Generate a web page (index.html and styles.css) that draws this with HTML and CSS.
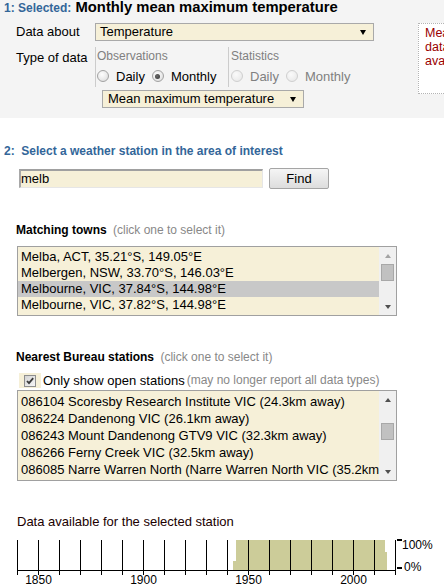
FILE: index.html
```html
<!DOCTYPE html>
<html lang="en">
<head>
<meta charset="utf-8">
<title>Climate data online</title>
<link rel="stylesheet" href="styles.css">
</head>
<body>
<section class="step1">
  <h1 class="step-title"><span class="step-num">1: Selected:</span> <span class="selected-name">Monthly mean maximum temperature</span></h1>
  <div class="step1-body">
    <div class="form">
      <div class="form-row">
        <div class="label">Data about</div>
        <div class="select select-wide"><span>Temperature</span><span class="caret"></span></div>
      </div>
      <div class="form-row form-row-type">
        <div class="label label-type">Type of data</div>
        <div class="type-controls">
          <div class="fieldsets">
            <div class="fieldset fs-obs">
              <div class="legend">Observations</div>
              <div class="radios">
                <span class="radio"></span><span class="radio-label">Daily</span>
                <span class="radio radio-checked"></span><span class="radio-label">Monthly</span>
              </div>
            </div>
            <div class="fieldset fs-stats">
              <div class="legend">Statistics</div>
              <div class="radios radios-disabled">
                <span class="radio radio-disabled"></span><span class="radio-label">Daily</span>
                <span class="radio radio-disabled"></span><span class="radio-label">Monthly</span>
              </div>
            </div>
          </div>
          <div class="select select-narrow"><span>Mean maximum temperature</span><span class="caret"></span></div>
        </div>
      </div>
    </div>
    <div class="infobox">Mean maximum temperature<br>data are not always<br>available for every station</div>
  </div>
</section>

<section class="step2">
  <h2 class="step-title2">2:&nbsp; Select a weather station in the area of interest</h2>
  <div class="search-row">
    <div class="search-input">melb</div>
    <div class="find-btn">Find</div>
  </div>

  <div class="section-label">Matching towns <span class="hint">(click one to select it)</span></div>
  <div class="listbox listbox-towns">
    <div class="list-items">
      <div class="list-item">Melba, ACT, 35.21°S, 149.05°E</div>
      <div class="list-item">Melbergen, NSW, 33.70°S, 146.03°E</div>
      <div class="list-item selected">Melbourne, VIC, 37.84°S, 144.98°E</div>
      <div class="list-item">Melbourne, VIC, 37.82°S, 144.98°E</div>
    </div>
    <div class="scrollbar">
      <div class="sb-btn"><span class="arrow-up arrow-light"></span></div>
      <div class="sb-track"><div class="sb-thumb"></div></div>
      <div class="sb-btn"><span class="arrow-down"></span></div>
    </div>
  </div>

  <div class="section-label section-label-stations">Nearest Bureau stations <span class="hint">(click one to select it)</span></div>
  <div class="check-row">
    <span class="check-bg"><span class="checkbox"><svg width="10" height="10" viewBox="0 0 10 10"><path d="M2 5 L4 7.2 L8.2 2.2" fill="none" stroke="#3a3a3a" stroke-width="1.8"/></svg></span></span>
    <span class="check-text">Only show open stations</span> <span class="check-hint">(may no longer report all data types)</span>
  </div>
  <div class="listbox listbox-stations">
    <div class="list-items">
      <div class="list-item">086104 Scoresby Research Institute VIC (24.3km away)</div>
      <div class="list-item">086224 Dandenong VIC (26.1km away)</div>
      <div class="list-item">086243 Mount Dandenong GTV9 VIC (32.3km away)</div>
      <div class="list-item">086266 Ferny Creek VIC (32.5km away)</div>
      <div class="list-item">086085 Narre Warren North (Narre Warren North VIC (35.2km away)</div>
    </div>
    <div class="scrollbar">
      <div class="sb-btn"><span class="arrow-up"></span></div>
      <div class="sb-track"><div class="sb-thumb sb-thumb-mid"></div></div>
      <div class="sb-btn"><span class="arrow-down"></span></div>
    </div>
  </div>

  <div class="chart-title">Data available for the selected station</div>
  <svg class="chart" width="444" height="56" viewBox="0 0 444 56">
    <g fill="#cccc99">
      <rect x="236" y="10" width="149" height="30"/>
      <rect x="233" y="31" width="3" height="9"/>
      <rect x="385" y="22" width="2" height="18"/>
    </g>
    <g stroke="#000" stroke-width="1">
      <line x1="17.5" y1="10" x2="17.5" y2="45"/>
      <line x1="38.5" y1="10" x2="38.5" y2="45"/>
      <line x1="59.5" y1="10" x2="59.5" y2="45"/>
      <line x1="80.5" y1="10" x2="80.5" y2="45"/>
      <line x1="101.5" y1="10" x2="101.5" y2="45"/>
      <line x1="122.5" y1="10" x2="122.5" y2="45"/>
      <line x1="143.5" y1="10" x2="143.5" y2="45"/>
      <line x1="164.5" y1="10" x2="164.5" y2="45"/>
      <line x1="185.5" y1="10" x2="185.5" y2="45"/>
      <line x1="206.5" y1="10" x2="206.5" y2="45"/>
      <line x1="227.5" y1="10" x2="227.5" y2="45"/>
      <line x1="248.5" y1="10" x2="248.5" y2="45"/>
      <line x1="269.5" y1="10" x2="269.5" y2="45"/>
      <line x1="290.5" y1="10" x2="290.5" y2="45"/>
      <line x1="311.5" y1="10" x2="311.5" y2="45"/>
      <line x1="332.5" y1="10" x2="332.5" y2="45"/>
      <line x1="353.5" y1="10" x2="353.5" y2="45"/>
      <line x1="374.5" y1="10" x2="374.5" y2="45"/>
      <line x1="395.5" y1="10" x2="395.5" y2="45"/>
      <line x1="17" y1="40.5" x2="396" y2="40.5"/>
    </g>
    <rect x="397" y="9" width="5" height="2" fill="#000"/>
    <rect x="397" y="37" width="5" height="2" fill="#000"/>
    <g class="chart-text">
      <text x="402" y="19">100%</text>
      <text x="404" y="40.5">0%</text>
      <text x="38.5" y="54" text-anchor="middle">1850</text>
      <text x="143.5" y="54" text-anchor="middle">1900</text>
      <text x="248.5" y="54" text-anchor="middle">1950</text>
      <text x="353.5" y="54" text-anchor="middle">2000</text>
    </g>
  </svg>
</section>
</body>
</html>
```

FILE: styles.css
```css
html, body {
  margin: 0;
  padding: 0;
  width: 444px;
  height: 586px;
  overflow: hidden;
}
body {
  font-family: "Liberation Sans", Arial, sans-serif;
  font-size: 13px;
  color: #000;
  background: #fff;
}

/* ---------- step 1 ---------- */
.step1 {
  background: #f4f4f4;
  height: 118px;
  overflow: hidden;
}
.step-title {
  margin: 0 0 7px;
  padding: 0 4px;
  line-height: 15px;
  font-size: 14.8px;
  font-weight: bold;
  white-space: nowrap;
}
.step-num {
  color: #336699;
  font-size: 12px;
}
.step1-body {
  display: flex;
  align-items: flex-start;
}
.form {
  flex: none;
  width: 402px;
  padding-left: 16px;
}
.form-row {
  display: flex;
}
.form-row-type {
  margin-top: 6px;
}
.label {
  flex: none;
  width: 79px;
  line-height: 18px;
}
.label-type {
  padding-top: 3px;
  line-height: 16px;
}
.select {
  box-sizing: border-box;
  height: 18px;
  border: 1px solid #a9a9a9;
  background: #f6f0d8;
  line-height: 16px;
  padding-left: 4px;
  display: flex;
  align-items: center;
  justify-content: space-between;
  white-space: nowrap;
}
.select-wide {
  width: 279px;
}
.select-narrow {
  width: 202px;
  margin: 3px 0 0 7px;
  padding-left: 5px;
}
.caret {
  width: 0;
  height: 0;
  border-left: 3.5px solid transparent;
  border-right: 3.5px solid transparent;
  border-top: 5px solid #000;
  margin-right: 7px;
}
.fieldsets {
  display: flex;
  height: 40px;
}
.fieldset {
  box-sizing: border-box;
  border-left: 1px solid #cccccc;
  padding: 2px 0 0 1px;
}
.fs-obs {
  width: 133px;
}
.fs-stats {
  padding-left: 2px;
}
.legend {
  color: #808080;
  font-size: 12px;
  line-height: 15px;
}
.radios {
  display: flex;
  align-items: flex-start;
  margin-top: 5px;
  line-height: 16px;
  white-space: nowrap;
}
.radios-disabled .radio-label {
  color: #808080;
}
.radio {
  flex: none;
  position: relative;
  box-sizing: border-box;
  width: 12px;
  height: 12px;
  margin: 1px 7px 0 0;
  border-radius: 50%;
  border: 1px solid #a2a2a2;
  background: radial-gradient(circle at 40% 35%, #fdfdfd 0, #eeeeee 45%, #d6d6d6 100%);
}
.radio-checked::after {
  content: "";
  position: absolute;
  left: 2.5px;
  top: 2.5px;
  width: 5px;
  height: 5px;
  border-radius: 50%;
  background: radial-gradient(circle at 40% 40%, #6a6a6a 0, #333 100%);
}
.radio-disabled {
  border-color: #cfcfcf;
  background: radial-gradient(circle at 40% 35%, #fafafa 0, #f0f0f0 50%, #e4e4e4 100%);
}
.radio-label {
  margin-right: 7px;
}
.infobox {
  flex: none;
  box-sizing: border-box;
  width: 170px;
  height: 71px;
  border: 1px dotted #b4b4b4;
  background: #fff;
  padding: 2px 6px;
  color: #990000;
  font-size: 12.5px;
  line-height: 14px;
  white-space: nowrap;
}

/* ---------- step 2 ---------- */
.step2 {
  padding-top: 26px;
}
.step-title2 {
  margin: 0;
  padding-left: 4px;
  font-size: 12px;
  line-height: 15px;
  font-weight: bold;
  color: #336699;
}
.search-row {
  display: flex;
  align-items: center;
  height: 21px;
  margin: 9px 0 0 19px;
}
.search-input {
  box-sizing: border-box;
  width: 244px;
  height: 19px;
  border-top: 2px solid #a0a0a0;
  border-left: 2px solid #a8a8a8;
  border-right: 1px solid #e6e6e6;
  border-bottom: 1px solid #e6e6e6;
  background: #f6f0d8;
  line-height: 16px;
}
.find-btn {
  box-sizing: border-box;
  width: 60px;
  height: 21px;
  margin-left: 6px;
  border: 1px solid #a5a5a5;
  border-radius: 2px;
  background: linear-gradient(#f5f5f5, #dddddd);
  text-align: center;
  line-height: 19px;
}
.section-label {
  margin: 34px 0 0 16px;
  font-size: 12px;
  font-weight: bold;
  line-height: 15px;
  white-space: nowrap;
}
.section-label-stations {
  margin-top: 34px;
}
.hint {
  font-weight: normal;
  color: #888;
  margin-left: 3px;
}
.listbox {
  box-sizing: border-box;
  display: flex;
  width: 380px;
  margin: 8px 0 0 17px;
  border: 1px solid #a0a0a0;
}
.listbox-towns {
  height: 70px;
}
.listbox-stations {
  height: 91px;
  margin-top: 2px;
}
.list-items {
  flex: 1;
  min-width: 0;
  overflow: hidden;
  background: #f6f0d8;
  padding-top: 2px;
}
.list-item {
  height: 16px;
  line-height: 16px;
  padding-left: 3px;
  white-space: nowrap;
}
.listbox-stations .list-item {
  height: 17px;
  line-height: 17px;
}
.list-item.selected {
  background: #c8c8c8;
}
.scrollbar {
  flex: none;
  width: 17px;
  display: flex;
  flex-direction: column;
  background: #f0f0f0;
}
.sb-btn {
  height: 17px;
  display: flex;
  align-items: center;
  justify-content: center;
}
.sb-track {
  flex: 1;
}
.sb-thumb {
  box-sizing: border-box;
  width: 13px;
  height: 17px;
  margin-left: 2px;
  background: #c1c1c1;
  border: 1px solid #a8a8a8;
}
.sb-thumb-mid {
  margin-top: 15px;
}
.arrow-up {
  width: 0;
  height: 0;
  border-left: 3.5px solid transparent;
  border-right: 3.5px solid transparent;
  border-bottom: 4px solid #505050;
}
.arrow-light {
  border-bottom-color: #a3a3a3;
}
.arrow-down {
  width: 0;
  height: 0;
  border-left: 3.5px solid transparent;
  border-right: 3.5px solid transparent;
  border-top: 4px solid #505050;
}
.check-row {
  display: flex;
  align-items: center;
  height: 15px;
  line-height: 15px;
  margin: 8px 0 0 19px;
  white-space: nowrap;
}
.check-bg {
  width: 22px;
  height: 15px;
  background: #f6f0d8;
  display: flex;
  align-items: center;
  justify-content: center;
}
.checkbox {
  box-sizing: border-box;
  width: 12px;
  height: 12px;
  border: 1px solid #8e8e8e;
  background: linear-gradient(135deg, #d4d4d4, #f6f6f6);
  display: flex;
  align-items: center;
  justify-content: center;
}
.checkbox svg {
  display: block;
}
.check-text {
  margin-left: 2px;
}
.check-hint {
  color: #888;
  font-size: 12px;
  margin-left: 2px;
}
.chart-title {
  margin: 33px 0 0 17px;
  line-height: 16px;
  color: #200000;
}
.chart {
  display: block;
}
.chart-text {
  font-family: "Liberation Sans", Arial, sans-serif;
  font-size: 12px;
  fill: #000;
}
```
